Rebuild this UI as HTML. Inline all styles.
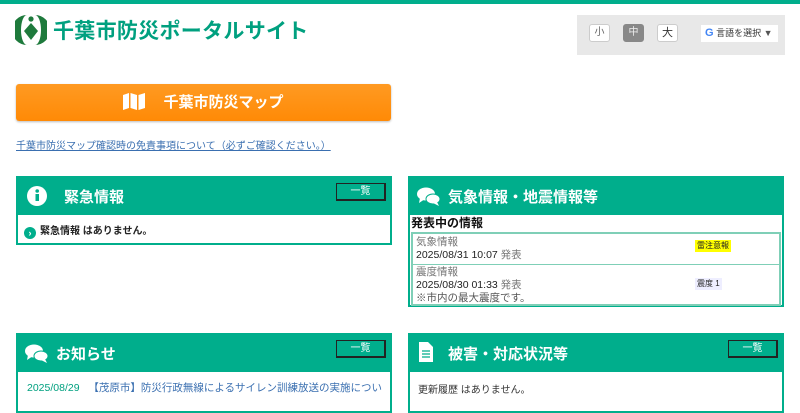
<!DOCTYPE html>
<html><head><meta charset="utf-8"><style>
*{margin:0;padding:0;box-sizing:border-box}
body{width:800px;height:400px;overflow:hidden;background:#fff;font-family:"Liberation Sans","Noto Sans CJK JP",sans-serif;position:relative}
.a{position:absolute}
.topbar{left:0;top:0;width:800px;height:4px;background:#00ae8c}
.title{left:53px;top:15px;font-size:21px;font-weight:bold;color:#00a07f;letter-spacing:0.3px}
.lang{left:577px;top:15px;width:208px;height:40px;background:#e8e8e8}
.fs{position:absolute;top:9px;width:21px;height:18px;border:1px solid #ccc;border-radius:3px;background:#fff;font-size:10px;text-align:center;line-height:16px;color:#666}
.btn{left:16px;top:84px;width:375px;height:37px;background:linear-gradient(#ff9a22,#ff8a06);border-radius:3px;box-shadow:0 1px 2px #bbb;color:#fff;font-size:15px;font-weight:bold;text-align:center;line-height:37px}
.link{left:16px;top:137px;font-size:10px;color:#3a6fb0;text-decoration:underline}
.panel{position:absolute;border:2px solid #00ae8c;background:#fff}
.ph{height:37px;background:#00ae8c;color:#fff;font-size:15px;font-weight:bold;position:relative}
.ph .t{position:absolute;left:38px;top:8px}
.more{position:absolute;right:4px;top:5px;width:50px;height:18px;border:1px solid #222;border-bottom-width:2px;border-right-width:2px;color:#fff;font-size:10px;text-align:center;line-height:15px;font-weight:normal}
</style></head><body>
<div class="a topbar"></div>
<svg class="a" style="left:15px;top:14px" width="32" height="32" viewBox="0 0 32 32">
<path d="M12 1 A15 15 0 0 0 12 31 A6 15 0 0 1 12 1Z" fill="#1e7a3c"/>
<path d="M20 1 A15 15 0 0 1 20 31 A6 15 0 0 0 20 1Z" fill="#1e7a3c"/>
<circle cx="16" cy="5" r="2.6" fill="#1e7a3c"/>
<path d="M16 9 L23 17 L16 26 L9 17Z" fill="#1e7a3c"/>
</svg>
<div class="a title">千葉市防災ポータルサイト</div>
<div class="a lang">
<div class="fs" style="left:12px">小</div>
<div class="fs" style="left:46px;background:#888;color:#eee;border-color:#888">中</div>
<div class="fs" style="left:80px;font-size:11px;color:#333">大</div>
<div style="position:absolute;left:124px;top:10px;width:77px;height:17px;background:#fff;font-size:9px;line-height:17px;color:#333;padding-left:4px"><b style="color:#4285f4;font-size:11px">G</b> 言語を選択 <span style="color:#555">▼</span></div>
</div>
<div class="a btn"><svg width="22" height="17" viewBox="0 0 22 17" style="vertical-align:-3px;margin-right:18px"><path d="M0 2 L6 0 L6 15 L0 17Z M7.5 0 L14 2 L14 17 L7.5 15Z M15.5 2 L22 0 L22 15 L15.5 17Z" fill="#fff"/></svg>千葉市防災マップ</div>
<div class="a link">千葉市防災マップ確認時の免責事項について（必ずご確認ください。）</div>

<div class="panel" style="left:16px;top:176px;width:376px;height:69px">
<div class="ph"><svg style="position:absolute;left:9px;top:8px" width="20" height="20"><circle cx="10" cy="10" r="10" fill="#fff"/><rect x="8.5" y="8" width="3.5" height="7" fill="#00ae8c"/><circle cx="10.2" cy="5" r="1.8" fill="#00ae8c"/></svg><span class="t" style="left:46px">緊急情報</span><div class="more">一覧</div></div>
<div style="padding:7px 6px;font-size:10px;font-weight:bold;color:#222"><span style="display:inline-block;width:12px;height:12px;border-radius:6px;background:#00ae8c;color:#fff;font-size:9px;line-height:12px;text-align:center;vertical-align:-2px;margin-right:4px">›</span>緊急情報 はありません。</div>
</div>

<div class="panel" style="left:408px;top:176px;width:376px;height:131px">
<div class="ph"><svg style="position:absolute;left:7px;top:9px" width="24" height="20" viewBox="0 0 24 20"><ellipse cx="9" cy="7" rx="9" ry="6.5" fill="#fff"/><path d="M3 11 L2 16 L8 12Z" fill="#fff"/><ellipse cx="16" cy="12" rx="7" ry="5" fill="#fff" stroke="#00ae8c" stroke-width="1"/><path d="M20 15 L22 19 L16 16Z" fill="#fff"/></svg><span class="t">気象情報・地震情報等</span></div>
<div style="font-size:12px;font-weight:bold;color:#111;height:17px;line-height:16px;padding-left:1px">発表中の情報</div>
<div style="border:2px solid #7fcfb7;margin:0 1px;height:74px;font-size:10.5px;color:#222;position:relative">
<div style="height:31px;border-bottom:1px solid #7fcfb7;padding:2px 3px;line-height:13px"><span style="color:#777">気象情報</span><br>2025/08/31 10:07 <span style="color:#777">発表</span>
<span style="position:absolute;left:282px;top:6px;background:#ff0;font-size:8px;padding:1px 2px;line-height:10px">雷注意報</span></div>
<div style="padding:1px 3px;line-height:13px"><span style="color:#777">震度情報</span><br>2025/08/30 01:33 <span style="color:#777">発表</span><br><span style="color:#555">※市内の最大震度です。</span>
<span style="position:absolute;left:282px;top:44px;background:#eef;font-size:8px;padding:1px 2px;line-height:10px">震度 1</span></div>
</div>
</div>

<div class="panel" style="left:16px;top:333px;width:376px;height:80px">
<div class="ph"><svg style="position:absolute;left:7px;top:9px" width="24" height="20" viewBox="0 0 24 20"><ellipse cx="9" cy="7" rx="9" ry="6.5" fill="#fff"/><path d="M3 11 L2 16 L8 12Z" fill="#fff"/><ellipse cx="16" cy="12" rx="7" ry="5" fill="#fff" stroke="#00ae8c" stroke-width="1"/><path d="M20 15 L22 19 L16 16Z" fill="#fff"/></svg><span class="t">お知らせ</span><div class="more">一覧</div></div>
<div style="padding:8px 9px;font-size:10.5px;white-space:nowrap;overflow:hidden"><span style="color:#00a07f">2025/08/29</span>&nbsp;&nbsp;&nbsp;<span style="color:#3a6fb0">【茂原市】防災行政無線によるサイレン訓練放送の実施につい</span></div>
</div>

<div class="panel" style="left:408px;top:333px;width:376px;height:80px">
<div class="ph"><svg style="position:absolute;left:9px;top:7px" width="14" height="20" viewBox="0 0 14 20"><path d="M0 0 H9 L14 5 V20 H0Z" fill="#fff"/><path d="M3 9 H11 M3 12 H11 M3 15 H11" stroke="#00ae8c" stroke-width="1.2"/></svg><span class="t">被害・対応状況等</span><div class="more">一覧</div></div>
<div style="padding:9px 8px;font-size:10px;color:#333">更新履歴 はありません。</div>
</div>
</body></html>
